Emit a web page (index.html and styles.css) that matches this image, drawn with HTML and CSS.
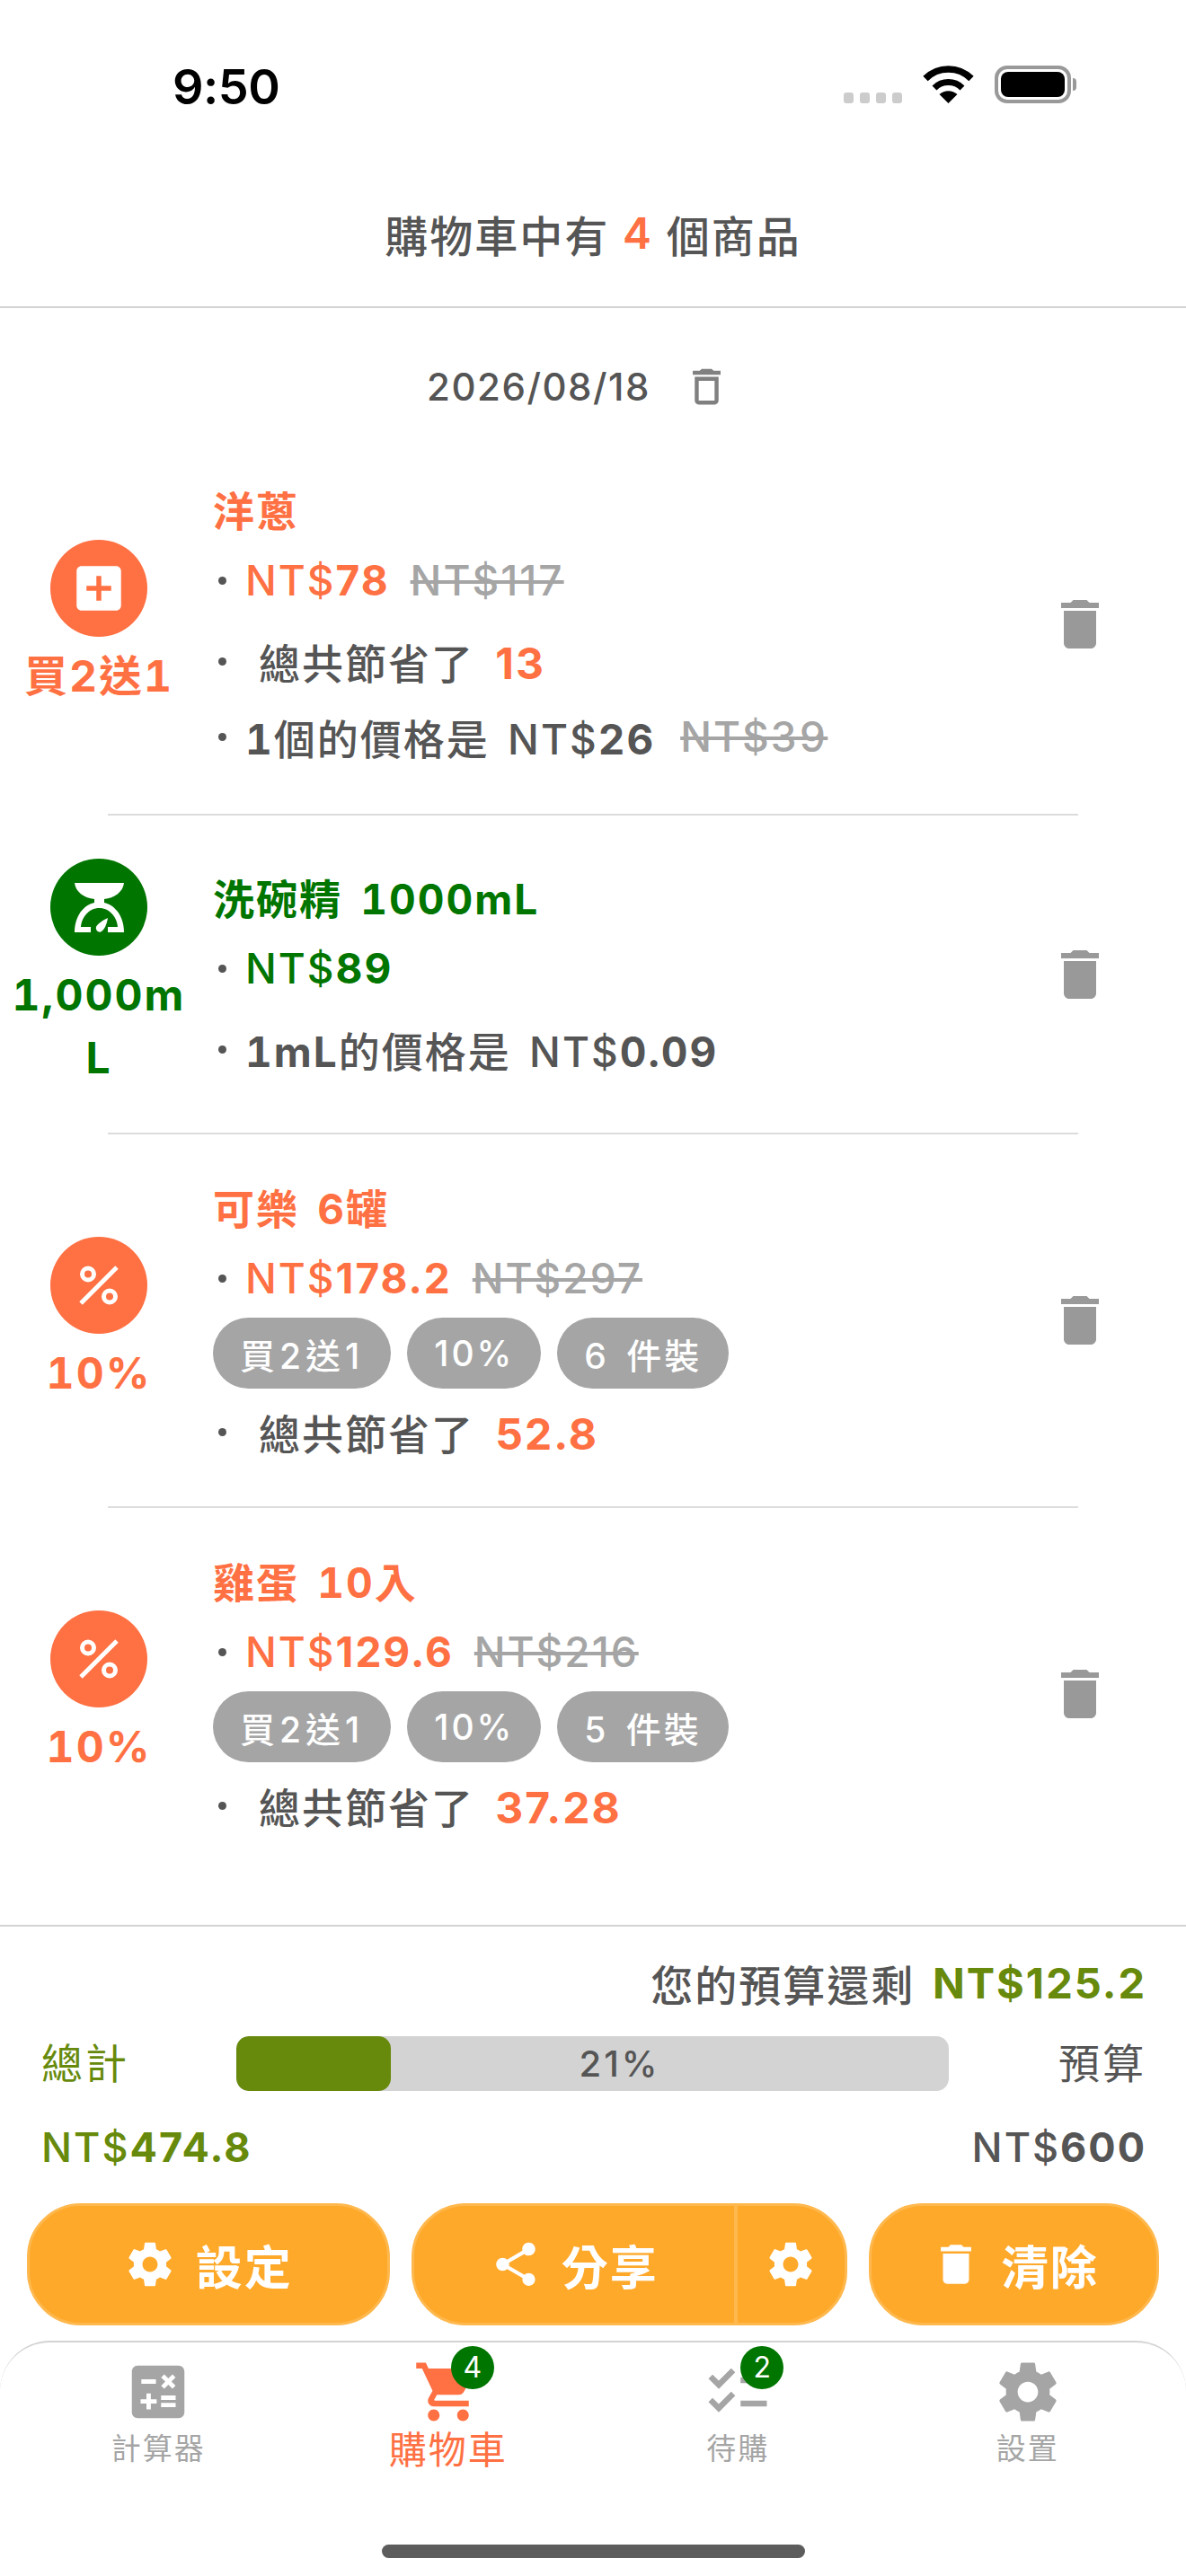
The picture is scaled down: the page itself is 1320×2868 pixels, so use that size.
FILE: index.html
```html
<!DOCTYPE html>
<html lang="zh-Hant">
<head>
  <meta charset="UTF-8" />
  <meta name="viewport" content="width=device-width, initial-scale=1" />
  <title>購物車</title>
  <link rel="stylesheet" href="styles.css">
</head>
<body>
  <div class="status-bar">
    <span class="time">9:50</span>
    <div class="status-icons">
      <div class="signal"><i></i><i></i><i></i><i></i></div>
      <svg class="wifi" viewBox="0 0 57 42"><path d="M3 14.5A36 36 0 0 1 54 14.5" fill="none" stroke="#000" stroke-width="7.5"/><path d="M13 25A22 22 0 0 1 44 25" fill="none" stroke="#000" stroke-width="7"/><path d="M28.5 42L18.5 32A15 15 0 0 1 38.5 32Z"/></svg>
      <div class="battery"><div class="battery-level"></div></div>
      <div class="battery-nub"></div>
    </div>
  </div>

  <header class="top-title">購物車中有 <b>4</b> 個商品</header>

  <main class="list">
    <div class="date-row">
      <span>2026/08/18</span>
      <svg class="date-trash" viewBox="0 0 24 24"><path d="M6 19c0 1.1.9 2 2 2h8c1.1 0 2-.9 2-2V7H6v12zM8 9h8v10H8V9zm7.5-5l-1-1h-5l-1 1H5v2h14V4z"/></svg>
    </div>

    <div class="item orange">
      <div class="badge">
        <div class="circle"><svg class="icon-add" viewBox="0 0 24 24"><path d="M19 3H5c-1.1 0-2 .9-2 2v14c0 1.1.9 2 2 2h14c1.1 0 2-.9 2-2V5c0-1.1-.9-2-2-2zm-2 10h-4v4h-2v-4H7v-2h4V7h2v4h4v2z"/></svg></div>
        <div class="badge-label">買2送1</div>
      </div>
      <div class="info">
        <div class="name">洋蔥</div>
        <div class="line price"><i class="dot"></i><span class="now">NT$<b>78</b></span><s>NT$117</s></div>
        <div class="line"><i class="dot"></i><span class="saved">總共節省了 <b>13</b></span></div>
        <div class="line unit"><i class="dot"></i><span><b>1</b>個的價格是 NT$<b>26</b></span><s>NT$39</s></div>
      </div>
      <svg class="trash" viewBox="0 0 24 24"><path d="M6 19c0 1.1.9 2 2 2h8c1.1 0 2-.9 2-2V7H6v12zM19 4h-3.5l-1-1h-5l-1 1H5v2h14V4z"/></svg>
    </div>
    <div class="sep"></div>

    <div class="item green">
      <div class="badge">
        <div class="circle">
          <svg class="icon-scale" viewBox="0 0 55 55"><path d="M0 0H55C54 10 44 17 33 18V22C46 25 55 38 55 55H37V49H48C47 37 38 28 27.5 28C17 28 8 37 7 49H18V55H0C0 38 9 25 22 22V18C11 17 1 10 0 0Z"/><path d="M37 39C36 46 33 52 30 54C27 56 23 53 24 49C25 46 32 41 37 39Z"/></svg>
        </div>
        <div class="badge-label">1,000mL</div>
      </div>
      <div class="info">
        <div class="name">洗碗精 1000mL</div>
        <div class="line price"><i class="dot"></i><span class="now">NT$<b>89</b></span></div>
        <div class="line unit"><i class="dot"></i><span><b>1mL</b>的價格是 NT$<b>0.09</b></span></div>
      </div>
      <svg class="trash" viewBox="0 0 24 24"><path d="M6 19c0 1.1.9 2 2 2h8c1.1 0 2-.9 2-2V7H6v12zM19 4h-3.5l-1-1h-5l-1 1H5v2h14V4z"/></svg>
    </div>
    <div class="sep"></div>

    <div class="item orange">
      <div class="badge">
        <div class="circle">
          <svg class="icon-percent" viewBox="0 0 44 44"><circle cx="10" cy="9.5" r="6.5"/><circle cx="34" cy="34.5" r="6.5"/><path d="M42 2L2 42"/></svg>
        </div>
        <div class="badge-label">10%</div>
      </div>
      <div class="info">
        <div class="name">可樂 6罐</div>
        <div class="line price"><i class="dot"></i><span class="now">NT$<b>178.2</b></span><s>NT$297</s></div>
        <div class="tags"><span>買2送1</span><span>10%</span><span>6 件裝</span></div>
        <div class="line"><i class="dot"></i><span class="saved">總共節省了 <b>52.8</b></span></div>
      </div>
      <svg class="trash" viewBox="0 0 24 24"><path d="M6 19c0 1.1.9 2 2 2h8c1.1 0 2-.9 2-2V7H6v12zM19 4h-3.5l-1-1h-5l-1 1H5v2h14V4z"/></svg>
    </div>
    <div class="sep"></div>

    <div class="item orange">
      <div class="badge">
        <div class="circle">
          <svg class="icon-percent" viewBox="0 0 44 44"><circle cx="10" cy="9.5" r="6.5"/><circle cx="34" cy="34.5" r="6.5"/><path d="M42 2L2 42"/></svg>
        </div>
        <div class="badge-label">10%</div>
      </div>
      <div class="info">
        <div class="name">雞蛋 10入</div>
        <div class="line price"><i class="dot"></i><span class="now">NT$<b>129.6</b></span><s>NT$216</s></div>
        <div class="tags"><span>買2送1</span><span>10%</span><span>5 件裝</span></div>
        <div class="line"><i class="dot"></i><span class="saved">總共節省了 <b>37.28</b></span></div>
      </div>
      <svg class="trash" viewBox="0 0 24 24"><path d="M6 19c0 1.1.9 2 2 2h8c1.1 0 2-.9 2-2V7H6v12zM19 4h-3.5l-1-1h-5l-1 1H5v2h14V4z"/></svg>
    </div>
  </main>

  <section class="summary">
    <div class="remain">您的預算還剩 <b>NT$125.2</b></div>
    <div class="budget-row">
      <span class="total-label">總計</span>
      <div class="bar"><div class="bar-fill" style="width: 21.7%"></div><span class="bar-text">21%</span></div>
      <span class="budget-label">預算</span>
    </div>
    <div class="amount-row">
      <span class="total-amount">NT$<b>474.8</b></span>
      <span class="budget-amount">NT$<b>600</b></span>
    </div>
    <div class="buttons">
      <button class="btn btn-setting">
        <svg viewBox="0 0 24 24"><path d="M19.43 12.98c.04-.32.07-.64.07-.98s-.03-.66-.07-.98l2.11-1.65c.19-.15.24-.42.12-.64l-2-3.46c-.12-.22-.39-.3-.61-.22l-2.49 1c-.52-.4-1.08-.73-1.69-.98l-.38-2.65C14.46 2.18 14.25 2 14 2h-4c-.25 0-.46.18-.49.42l-.38 2.65c-.61.25-1.17.59-1.69.98l-2.49-1c-.23-.09-.49 0-.61.22l-2 3.46c-.13.22-.07.49.12.64l2.11 1.65c-.04.32-.07.65-.07.98s.03.66.07.98l-2.11 1.65c-.19.15-.24.42-.12.64l2 3.46c.12.22.39.3.61.22l2.49-1c.52.4 1.08.73 1.69.98l.38 2.65c.03.24.24.42.49.42h4c.25 0 .46-.18.49-.42l.38-2.65c.61-.25 1.17-.59 1.69-.98l2.49 1c.23.09.49 0 .61-.22l2-3.46c.12-.22.07-.49-.12-.64l-2.11-1.65zM12 15.5c-1.93 0-3.5-1.57-3.5-3.5s1.57-3.5 3.5-3.5 3.5 1.57 3.5 3.5-1.57 3.5-3.5 3.5z"/></svg>
        設定
      </button>
      <div class="btn btn-share">
        <div class="share-main">
          <svg viewBox="0 0 24 24"><path d="M18 16.08c-.76 0-1.44.3-1.96.77L8.91 12.7c.05-.23.09-.46.09-.7s-.04-.47-.09-.7l7.05-4.11c.54.5 1.25.81 2.04.81 1.66 0 3-1.34 3-3s-1.34-3-3-3-3 1.34-3 3c0 .24.04.47.09.7L8.04 9.81C7.5 9.31 6.79 9 6 9c-1.66 0-3 1.34-3 3s1.34 3 3 3c.79 0 1.5-.31 2.04-.81l7.12 4.16c-.05.21-.08.43-.08.65 0 1.61 1.31 2.92 2.92 2.92 1.61 0 2.92-1.31 2.92-2.92s-1.31-2.92-2.92-2.92z"/></svg>
          分享
        </div>
        <div class="share-gear">
          <svg viewBox="0 0 24 24"><path d="M19.43 12.98c.04-.32.07-.64.07-.98s-.03-.66-.07-.98l2.11-1.65c.19-.15.24-.42.12-.64l-2-3.46c-.12-.22-.39-.3-.61-.22l-2.49 1c-.52-.4-1.08-.73-1.69-.98l-.38-2.65C14.46 2.18 14.25 2 14 2h-4c-.25 0-.46.18-.49.42l-.38 2.65c-.61.25-1.17.59-1.69.98l-2.49-1c-.23-.09-.49 0-.61.22l-2 3.46c-.13.22-.07.49.12.64l2.11 1.65c-.04.32-.07.65-.07.98s.03.66.07.98l-2.11 1.65c-.19.15-.24.42-.12.64l2 3.46c.12.22.39.3.61.22l2.49-1c.52.4 1.08.73 1.69.98l.38 2.65c.03.24.24.42.49.42h4c.25 0 .46-.18.49-.42l.38-2.65c.61-.25 1.17-.59 1.69-.98l2.49 1c.23.09.49 0 .61-.22l2-3.46c.12-.22.07-.49-.12-.64l-2.11-1.65zM12 15.5c-1.93 0-3.5-1.57-3.5-3.5s1.57-3.5 3.5-3.5 3.5 1.57 3.5 3.5-1.57 3.5-3.5 3.5z"/></svg>
        </div>
      </div>
      <button class="btn btn-clear">
        <svg viewBox="0 0 24 24"><path d="M6 19c0 1.1.9 2 2 2h8c1.1 0 2-.9 2-2V7H6v12zM19 4h-3.5l-1-1h-5l-1 1H5v2h14V4z"/></svg>
        清除
      </button>
    </div>
  </section>

  <nav class="tabbar">
    <div class="tabs">
      <div class="tab">
        <div class="tab-icon"><svg viewBox="0 0 24 24"><path d="M19 3H5c-1.1 0-2 .9-2 2v14c0 1.1.9 2 2 2h14c1.1 0 2-.9 2-2V5c0-1.1-.9-2-2-2zm-5.97 4.06L14.09 6l1.41 1.41L16.91 6l1.06 1.06-1.41 1.41 1.41 1.41-1.06 1.06-1.41-1.4-1.41 1.41-1.06-1.06 1.41-1.41-1.41-1.42zm-6.78.66h5v1.5h-5v-1.5zM11.5 16h-2v2H8v-2H6v-1.5h2v-2h1.5v2h2V16zm6.5 1.25h-5v-1.5h5v1.5zm0-2.5h-5v-1.5h5v1.5z"/></svg></div>
        <span class="tab-label">計算器</span>
      </div>
      <div class="tab active">
        <div class="tab-icon">
          <svg viewBox="0 0 24 24"><path d="M7 18c-1.1 0-1.99.9-1.99 2S5.9 22 7 22s2-.9 2-2-.9-2-2-2zM1 2v2h2l3.6 7.59-1.35 2.45c-.16.28-.25.61-.25.96 0 1.1.9 2 2 2h12v-2H7.42c-.14 0-.25-.11-.25-.25l.03-.12.9-1.63h7.45c.75 0 1.41-.41 1.75-1.03l3.58-6.47c.08-.14.12-.31.12-.48 0-.55-.45-1-1-1H5.21l-.94-2H1zm16 16c-1.1 0-1.99.9-1.99 2s.89 2 1.99 2 2-.9 2-2-.9-2-2-2z"/></svg>
          <span class="count">4</span>
        </div>
        <span class="tab-label">購物車</span>
      </div>
      <div class="tab">
        <div class="tab-icon">
          <svg viewBox="0 0 24 24"><path d="M22 7h-9v2h9V7zm0 8h-9v2h9v-2zM5.54 11L2 7.46l1.41-1.41 2.12 2.12 4.24-4.24 1.41 1.41L5.54 11zm0 8L2 15.46l1.41-1.41 2.12 2.12 4.24-4.24 1.41 1.41L5.54 19z"/></svg>
          <span class="count">2</span>
        </div>
        <span class="tab-label">待購</span>
      </div>
      <div class="tab">
        <div class="tab-icon"><svg viewBox="0 0 24 24"><path d="M19.43 12.98c.04-.32.07-.64.07-.98s-.03-.66-.07-.98l2.11-1.65c.19-.15.24-.42.12-.64l-2-3.46c-.12-.22-.39-.3-.61-.22l-2.49 1c-.52-.4-1.08-.73-1.69-.98l-.38-2.65C14.46 2.18 14.25 2 14 2h-4c-.25 0-.46.18-.49.42l-.38 2.65c-.61.25-1.17.59-1.69.98l-2.49-1c-.23-.09-.49 0-.61.22l-2 3.46c-.13.22-.07.49.12.64l2.11 1.65c-.04.32-.07.65-.07.98s.03.66.07.98l-2.11 1.65c-.19.15-.24.42-.12.64l2 3.46c.12.22.39.3.61.22l2.49-1c.52.4 1.08.73 1.69.98l.38 2.65c.03.24.24.42.49.42h4c.25 0 .46-.18.49-.42l.38-2.65c.61-.25 1.17-.59 1.69-.98l2.49 1c.23.09.49 0 .61-.22l2-3.46c.12-.22.07-.49-.12-.64l-2.11-1.65zM12 15.5c-1.93 0-3.5-1.57-3.5-3.5s1.57-3.5 3.5-3.5 3.5 1.57 3.5 3.5-1.57 3.5-3.5 3.5z"/></svg></div>
        <span class="tab-label">設置</span>
      </div>
    </div>
    <div class="home-bar"></div>
  </nav>
</body>
</html>
```

FILE: styles.css
```css
html, body {
  height: 100%;
  margin: 0;
  padding: 0;
}

body {
  width: 1320px;
  height: 2868px;
  display: flex;
  flex-direction: column;
  background-color: #fff;
  color: #555;
  font-family: Inter, "Noto Sans CJK TC", sans-serif;
  overflow: hidden;
}

/* status bar */
.status-bar {
  height: 186px;
  flex: none;
  box-sizing: border-box;
  padding: 66px 122px 0 192px;
  display: flex;
  justify-content: space-between;
  align-items: flex-start;
}

.time {
  font-size: 54px;
  line-height: 62px;
  font-weight: 600;
  letter-spacing: -0.5px;
  color: #000;
}

.status-icons {
  display: flex;
  align-items: flex-end;
  margin-top: 7px;
}

.signal {
  display: flex;
  gap: 7px;
  margin-right: 23px;
}

.signal i {
  width: 11px;
  height: 12px;
  border-radius: 3px;
  background-color: #ccc;
}

.wifi {
  width: 57px;
  height: 42px;
  margin-right: 23px;
}

.battery {
  width: 85px;
  height: 42px;
  box-sizing: border-box;
  border: 4px solid #999;
  border-radius: 14px;
  padding: 3px;
}

.battery-level {
  height: 100%;
  background-color: #000;
  border-radius: 8px;
}

.battery-nub {
  width: 4px;
  height: 14px;
  margin: 0 0 14px 2px;
  background-color: #999;
  border-radius: 0 4px 4px 0;
}

/* title */
.top-title {
  height: 157px;
  flex: none;
  box-sizing: border-box;
  padding-bottom: 8px;
  border-bottom: 2px solid #d3d3d3;
  display: flex;
  justify-content: center;
  align-items: center;
  white-space: pre;
  font-size: 48px;
  letter-spacing: 2px;
  font-weight: 500;
}

.top-title b {
  color: #ff7043;
  font-weight: 600;
}

/* list */
.list {
  flex: 1;
  min-height: 0;
}

.date-row {
  height: 70px;
  margin: 52px 0 21px;
  padding-right: 32px;
  display: flex;
  justify-content: center;
  align-items: center;
  gap: 36px;
  font-size: 42px;
  font-weight: 500;
  letter-spacing: 1.5px;
}

.date-trash {
  width: 53px;
  height: 53px;
  fill: #808080;
}

.item {
  display: flex;
  align-items: center;
  padding: 43px 82px 43px 10px;
}

.date-row + .item {
  padding-bottom: 46px;
}

.item.green {
  padding-top: 48px;
  padding-bottom: 48px;
}

.sep {
  height: 2px;
  margin: 0 120px;
  background-color: #dcdcdc;
}

.badge {
  width: 200px;
  flex: none;
  margin-right: 27px;
  display: flex;
  flex-direction: column;
  align-items: center;
}

.circle {
  width: 108px;
  height: 108px;
  border-radius: 50%;
  display: flex;
  justify-content: center;
  align-items: center;
}

.badge-label {
  margin-top: 9px;
  width: 100%;
  text-align: center;
  word-break: break-all;
  font-size: 48px;
  line-height: 70px;
  font-weight: 700;
  letter-spacing: 2px;
  font-variant-numeric: tabular-nums;
}

.orange .circle {
  background-color: #ff7043;
}

.green .circle {
  background-color: #007500;
}

.orange .badge-label,
.orange .name,
.orange .now,
.saved b {
  color: #ff7043;
}

.green .badge-label,
.green .name,
.green .now {
  color: #007500;
}

.icon-add {
  width: 66px;
  height: 66px;
  fill: #fff;
}

.icon-scale {
  width: 55px;
  height: 55px;
  fill: #fff;
}

.icon-percent {
  width: 44px;
  height: 44px;
  fill: none;
  stroke: #fff;
  stroke-width: 5;
}

.info {
  flex: 1;
  min-width: 0;
  padding: 10px 0;
}

.name {
  height: 60px;
  margin-bottom: 17px;
  font-size: 46px;
  line-height: 60px;
  font-weight: 700;
  letter-spacing: 2px;
  word-spacing: 6px;
  font-variant-numeric: tabular-nums;
}

.line {
  height: 60px;
  margin-top: 24px;
  display: flex;
  align-items: center;
  font-size: 46px;
  font-weight: 500;
  letter-spacing: 2px;
  word-spacing: 5px;
  white-space: pre;
}

.price {
  margin-top: 0;
}

.price + .line {
  margin-top: 30px;
}

.line b {
  font-weight: 700;
}

.unit {
  font-variant-numeric: tabular-nums;
  word-spacing: 6px;
}

.dot {
  width: 9px;
  height: 9px;
  flex: none;
  margin: 0 21px 0 6px;
  border-radius: 50%;
  background-color: #555;
}

.saved {
  margin-left: 15px;
  word-spacing: 9px;
}

.saved b {
  font-size: 48px;
}

.line s {
  margin-left: 23px;
  color: #a5a5a5;
  font-weight: 500;
}

.unit s {
  margin-left: 28px;
}

.tags {
  display: flex;
  gap: 18px;
  margin-top: 14px;
  color: #fff;
  font-size: 39px;
  font-weight: 500;
  letter-spacing: 3px;
  word-spacing: 6px;
}

.tags + .line {
  margin-top: 18px;
}

.tags span {
  height: 79px;
  padding: 0 30px;
  display: flex;
  align-items: center;
  white-space: pre;
  border-radius: 40px;
  background-color: #a5a5a5;
}

.tags span:first-child {
  letter-spacing: 5px;
}

.trash {
  width: 72px;
  height: 72px;
  flex: none;
  fill: #999;
}

/* totals */
.summary {
  flex: none;
  box-sizing: border-box;
  height: 463px;
  border-top: 2px solid #d3d3d3;
  padding: 32px 30px 0;
}

.remain {
  height: 60px;
  margin-right: 14px;
  display: flex;
  justify-content: flex-end;
  align-items: center;
  white-space: pre;
  font-size: 47px;
  font-weight: 500;
  letter-spacing: 2px;
  word-spacing: 5px;
}

.remain b,
.total-label,
.total-amount {
  color: #678a0c;
}

.remain b {
  font-weight: 700;
}

.budget-row {
  display: flex;
  align-items: center;
  margin: 30px 14px 0 16px;
  font-size: 46px;
  line-height: 61px;
  letter-spacing: 3px;
}

.total-label {
  width: 217px;
  flex: none;
}

.bar {
  position: relative;
  width: 793px;
  height: 61px;
  flex: none;
  display: flex;
  justify-content: center;
  align-items: center;
  padding-left: 60px;
  box-sizing: border-box;
  border-radius: 14px;
  background-color: #d3d3d3;
  overflow: hidden;
  font-size: 40px;
  font-weight: 500;
}

.bar-fill {
  position: absolute;
  left: 0;
  top: 0;
  bottom: 0;
  border-radius: 14px;
  background-color: #678a0c;
}

.budget-label {
  flex: 1;
  text-align: right;
}

.amount-row {
  height: 60px;
  margin: 32px 14px 0 16px;
  display: flex;
  justify-content: space-between;
  align-items: center;
  font-size: 45px;
  font-weight: 500;
  letter-spacing: 2px;
}

.amount-row b {
  font-weight: 700;
}

/* buttons */
.buttons {
  display: flex;
  gap: 24px;
  margin-top: 33px;
}

.btn {
  height: 136px;
  box-sizing: border-box;
  border: 3px solid #ffb84d;
  border-radius: 60px;
  background-color: #ffa92b;
  color: #fff;
  font-family: inherit;
  font-size: 52px;
  font-weight: 700;
  letter-spacing: 2px;
  display: flex;
  justify-content: center;
  align-items: center;
  gap: 22px;
  padding: 0;
}

.btn svg {
  width: 58px;
  height: 58px;
  fill: #fff;
  flex: none;
}

.btn-setting {
  width: 404px;
}

.btn-share {
  width: 486px;
  justify-content: flex-start;
  gap: 0;
}

.btn-clear {
  width: 323px;
}

.share-main {
  width: 356px;
  height: 100%;
  display: flex;
  justify-content: center;
  align-items: center;
  gap: 22px;
}

.share-gear {
  flex: 1;
  height: 100%;
  border-left: 4px solid #ffb84d;
  display: flex;
  justify-content: center;
  align-items: center;
}

/* bottom tabs */
.tabbar {
  height: 262px;
  flex: none;
  box-sizing: border-box;
  border-top: 2px solid #d3d3d3;
  border-radius: 56px 56px 0 0;
  padding: 16px 15px 20px;
  display: flex;
  flex-direction: column;
  align-items: center;
}

.tabs {
  width: 100%;
  flex: 1;
  display: flex;
}

.tab {
  flex: 1;
  display: flex;
  flex-direction: column;
  align-items: center;
  color: #a5a5a5;
}

.tab-icon {
  position: relative;
  width: 78px;
  height: 78px;
  fill: #a5a5a5;
}

.tab-icon svg {
  width: 78px;
  height: 78px;
  display: block;
}

.tab-label {
  margin-top: -1px;
  font-size: 33px;
  line-height: 50px;
  letter-spacing: 2px;
}

.tab.active .tab-icon {
  fill: #ff7043;
}

.tab.active .tab-label {
  margin-top: 1px;
  font-size: 42px;
  letter-spacing: 2px;
  color: #ff7043;
}

.count {
  position: absolute;
  left: 42px;
  top: -12px;
  width: 48px;
  height: 48px;
  border-radius: 50%;
  background-color: #007500;
  color: #fff;
  font-size: 32px;
  line-height: 48px;
  text-align: center;
}

.home-bar {
  width: 471px;
  height: 15px;
  flex: none;
  border-radius: 8px;
  background-color: #5c5c5c;
}
```
